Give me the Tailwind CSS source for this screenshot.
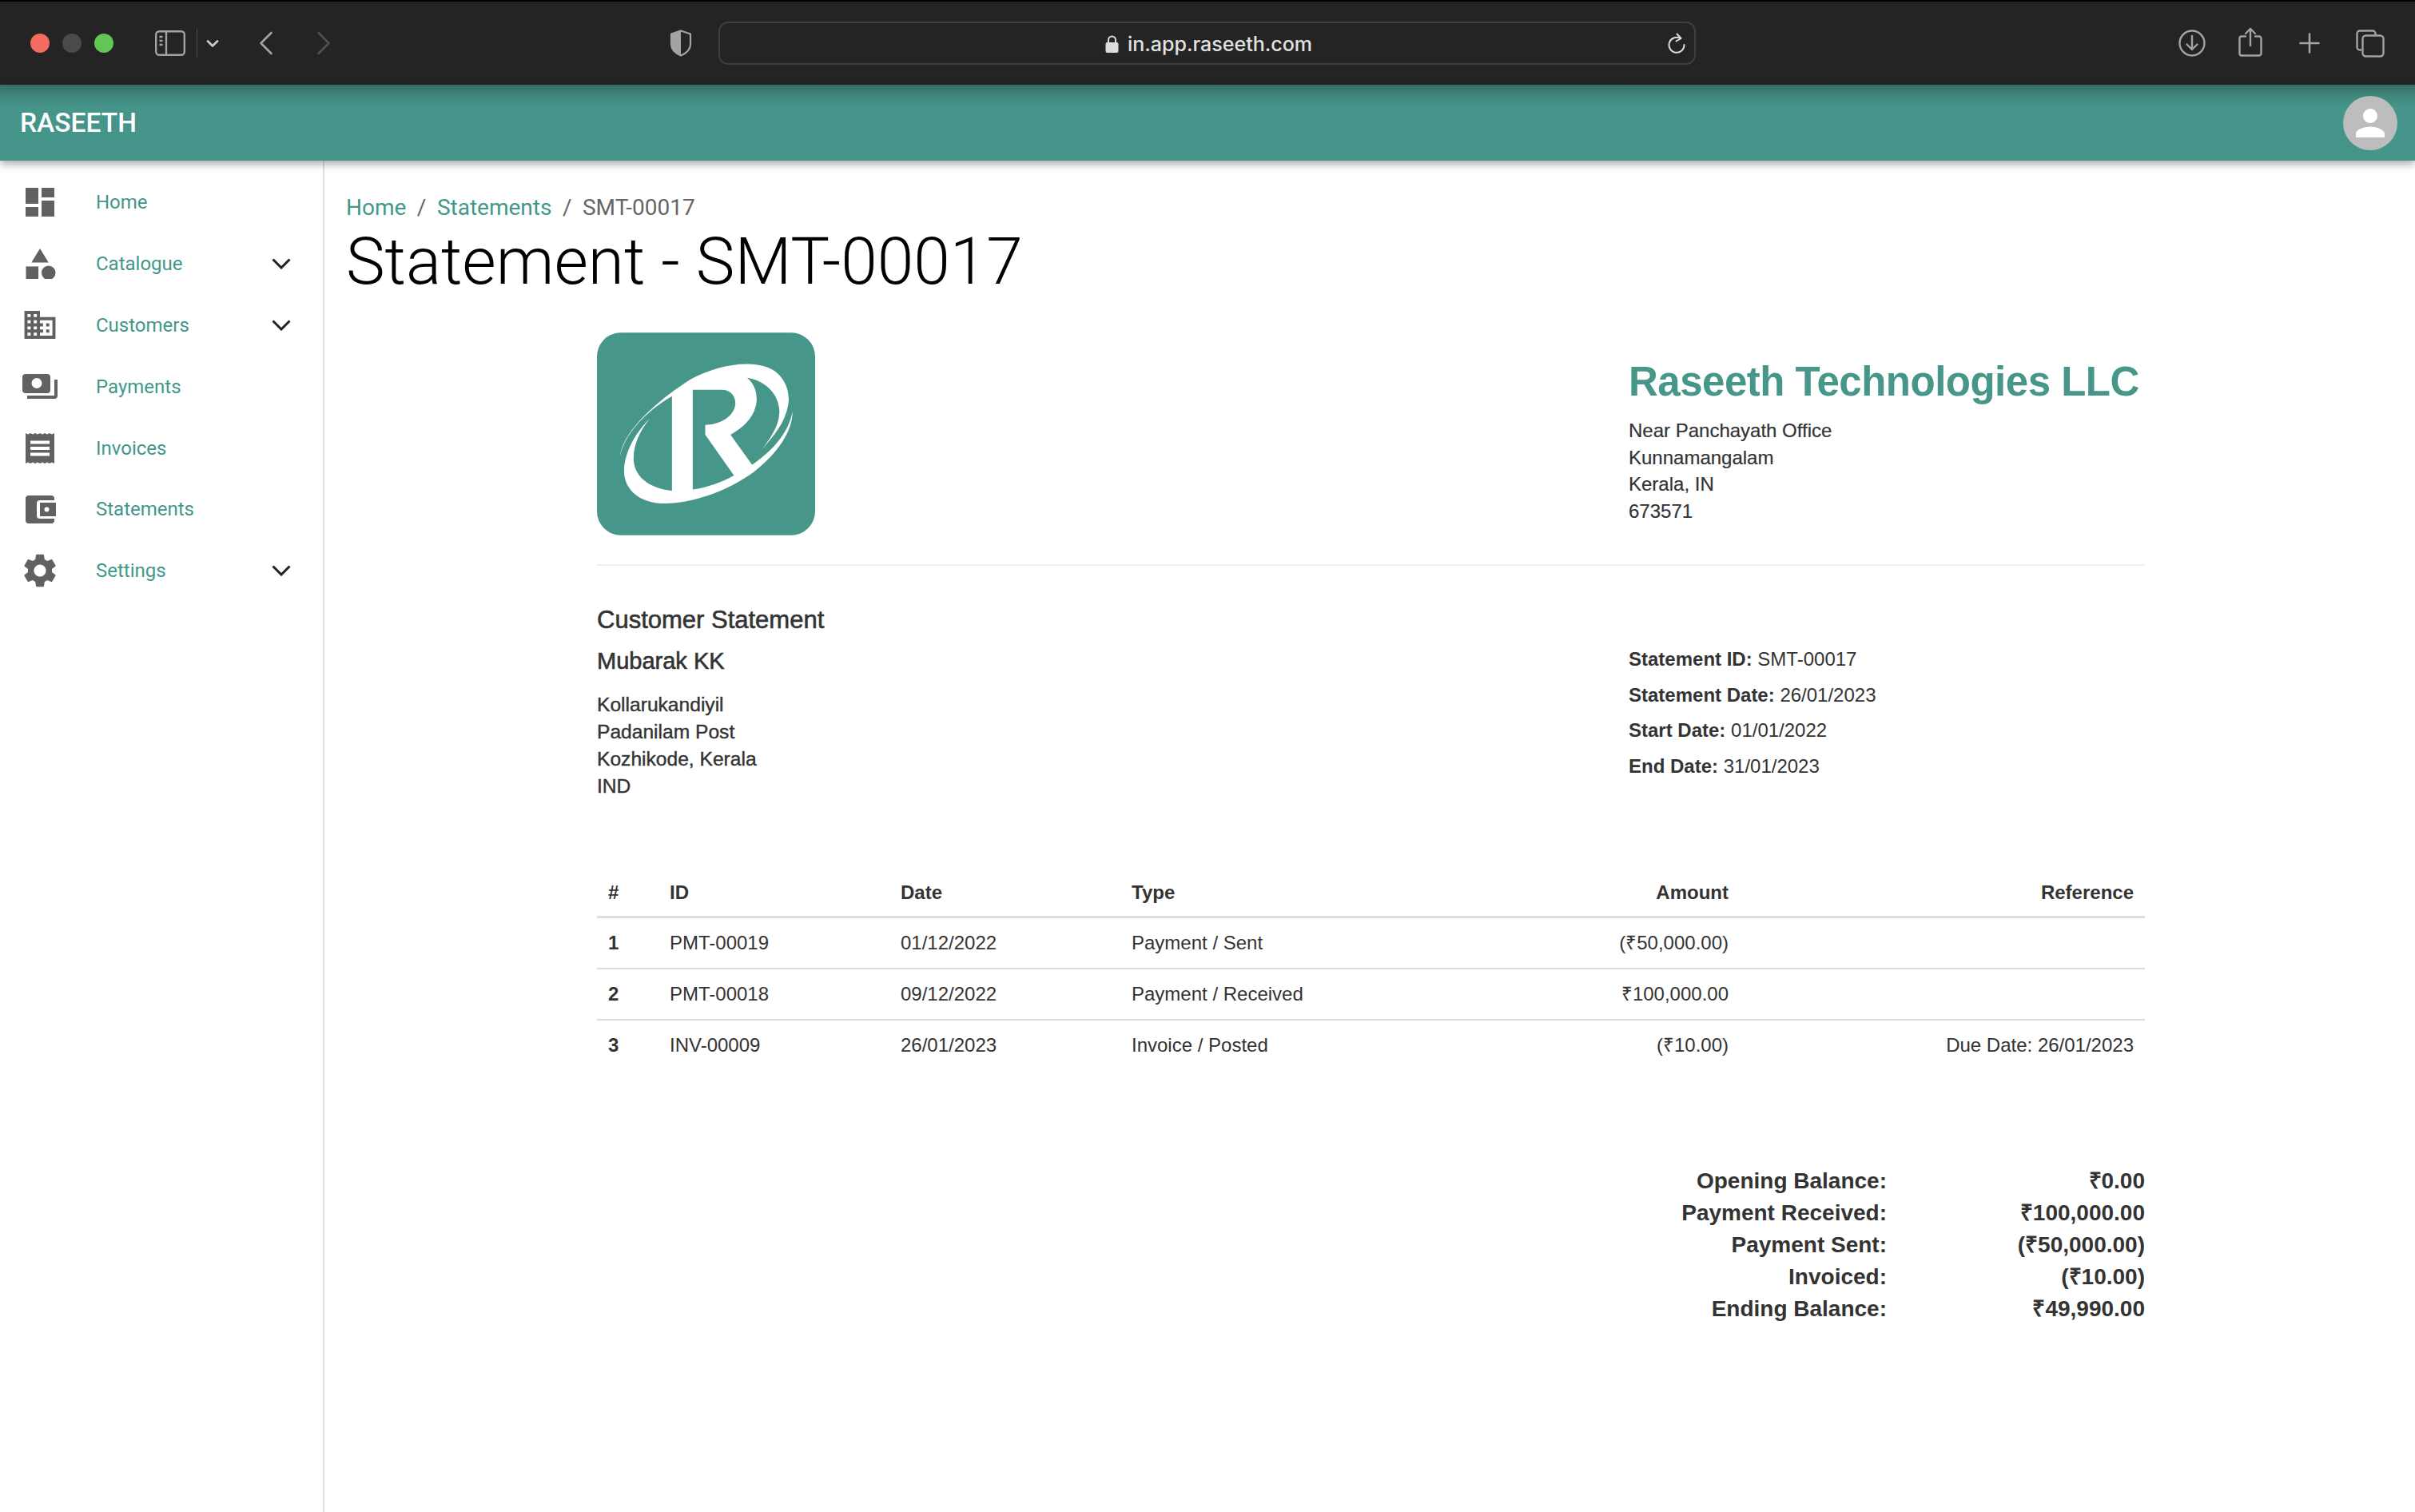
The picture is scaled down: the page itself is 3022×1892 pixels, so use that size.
<!doctype html>
<html lang="en">
<head>
<meta charset="utf-8">
<title>Statement - SMT-00017</title>
<script src="https://cdn.jsdelivr.net/npm/@tailwindcss/browser@4"></script>
</head>
<body class="m-0 bg-white">
<div class="flex h-[1892px] w-[3022px] flex-col overflow-hidden bg-white font-['Liberation_Sans',Arial,sans-serif] text-[#333]">

  <!-- Browser toolbar -->
  <div class="flex h-[106px] shrink-0 items-center border-t-2 border-black bg-[#252425] pl-[38px]">
    <span class="h-[24px] w-[24px] rounded-full bg-[#f46b60]"></span>
    <span class="ml-[16px] h-[24px] w-[24px] rounded-full bg-[#4a4a4b]"></span>
    <span class="ml-[16px] h-[24px] w-[24px] rounded-full bg-[#62c655]"></span>
    <svg class="ml-[52px]" width="38" height="32" viewBox="0 0 38 32" fill="none" stroke="#a3a3a3" stroke-width="2.4"><rect x="1.2" y="1.2" width="35.6" height="29.6" rx="4"/><path d="M14 1v30"/><path d="M5.5 8h4M5.5 13h4M5.5 18h4"/></svg>
    <span class="ml-[14px] h-[36px] w-[1px] bg-[#4a4a4a]"></span>
    <svg class="ml-[11px]" width="16" height="9" viewBox="0 0 16 9" fill="none" stroke="#c8c8c8" stroke-width="2.8" stroke-linecap="round" stroke-linejoin="round"><path d="M2 1.5l6 6 6-6"/></svg>
    <svg class="ml-[50px]" width="18" height="30" viewBox="0 0 18 30" fill="none" stroke="#a3a3a3" stroke-width="2.6" stroke-linecap="round" stroke-linejoin="round"><path d="M15.5 2L2.5 15l13 13"/></svg>
    <svg class="ml-[54px]" width="18" height="30" viewBox="0 0 18 30" fill="none" stroke="#505050" stroke-width="2.6" stroke-linecap="round" stroke-linejoin="round"><path d="M2.5 2l13 13-13 13"/></svg>
    <svg class="ml-[424px]" width="28" height="34" viewBox="0 0 28 34" fill="none"><path d="M14 1.500l12 4v13c0 6-5 11-12 14C7 29.500 2 24.500 2 18.500v-13z" stroke="#a3a3a3" stroke-width="2.200"/><path d="M14 1.500l-12 4v13c0 6 5 11 12 14z" fill="#a3a3a3"/></svg>
    <div class="ml-[33px] flex h-[54px] w-[1223px] items-center rounded-[12px] border-2 border-[#3f3e3f] pr-[10px]">
      <div class="flex flex-1 items-center justify-center pl-[38px] pt-[2px]">
        <svg width="17" height="24" viewBox="0 0 17 24" fill="#dcdcdc"><path d="M3 10V7a5.500 5.500 0 0 1 11 0v3h-2V7a3.500 3.500 0 0 0-7 0v3z"/><rect x="0.500" y="10" width="16" height="13" rx="2"/></svg>
        <span class="ml-[11px] font-['Inter',sans-serif] text-[25px] font-medium leading-none text-[#e2e2e2]">in.app.raseeth.com</span>
      </div>
      <svg width="24" height="26" viewBox="0 0 24 26" fill="none" stroke="#dcdcdc" stroke-width="2" stroke-linecap="round" stroke-linejoin="round"><path d="M17 7.200A9.500 9.500 0 1 0 21.500 15"/><path d="M12.500 1.500l5 5.500-6 3.500"/></svg>
    </div>
    <svg class="ml-[604px]" width="34" height="34" viewBox="0 0 34 34" fill="none" stroke="#a3a3a3" stroke-width="2.4" stroke-linecap="round" stroke-linejoin="round"><circle cx="17" cy="17" r="15.500"/><path d="M17 8v17M10.500 18.500L17 25l6.500-6.500"/></svg>
    <svg class="ml-[41px] -mt-[3px]" width="30" height="37" viewBox="0 0 30 37" fill="none" stroke="#a3a3a3" stroke-width="2.400" stroke-linecap="round" stroke-linejoin="round"><path d="M9 11.500H4a2.500 2.500 0 0 0-2.500 2.500v19a2.500 2.500 0 0 0 2.500 2.500h22a2.500 2.500 0 0 0 2.500-2.500V14a2.500 2.500 0 0 0-2.500-2.500h-5"/><path d="M15 23V2M9 8l6-6 6 6"/></svg>
    <svg class="ml-[46px]" width="26" height="26" viewBox="0 0 26 26" fill="none" stroke="#a3a3a3" stroke-width="2.600" stroke-linecap="round"><path d="M13 1.500v23M1.500 13h23"/></svg>
    <svg class="ml-[45px]" width="36" height="35" viewBox="0 0 36 35" fill="none" stroke="#a3a3a3" stroke-width="2.400"><path d="M7 25.500H5a3.500 3.500 0 0 1-3.500-3.500V5A3.500 3.500 0 0 1 5 1.500h16A3.500 3.500 0 0 1 24.500 5v2.500"/><rect x="8.500" y="7.500" width="26" height="26" rx="4"/></svg>
  </div>

  <!-- App bar -->
  <header class="relative z-10 flex h-[95px] shrink-0 items-center justify-between bg-[linear-gradient(to_bottom,#366c64_0px,#41877d_14px,#45958a_28px,#44948a_100%)] pl-[25px] pr-[22px] shadow-[0_4px_10px_rgba(0,0,0,0.35)]">
    <span class="font-['Roboto',sans-serif] text-[33.500px] font-medium leading-none text-white">RASEETH</span>
    <span class="flex h-[68px] w-[68px] items-center justify-center rounded-full bg-[#bdbdbd]">
      <svg width="54" height="54" viewBox="0 0 24 24" fill="#ffffff"><path d="M12 12c2.200 0 4-1.800 4-4s-1.800-4-4-4-4 1.800-4 4 1.800 4 4 4zm0 2c-2.700 0-8 1.300-8 4v2h16v-2c0-2.700-5.300-4-8-4z"/></svg>
    </span>
  </header>

  <div class="flex min-h-0 flex-1">
    <!-- Sidebar -->
    <nav class="flex w-[406px] shrink-0 flex-col border-r-2 border-[#e2e2e2] pt-[14px] font-['Roboto',sans-serif] text-[24px] text-[#42978a]">
      <a class="flex h-[76.800px] items-center">
        <svg class="ml-[32px]" width="36" height="36" viewBox="3 3 18 18" fill="#616161"><path d="M3 13h8V3H3v10zm0 8h8v-6H3v6zm10 0h8V11h-8v10zm0-18v6h8V3h-8z"/></svg>
        <span class="ml-[52px]">Home</span>
      </a>
      <a class="flex h-[76.800px] items-center">
        <svg class="ml-[32px]" width="38" height="38" viewBox="3 2 19 19.500" fill="#616161"><path d="M12 2l-5.500 9h11z"/><circle cx="17.500" cy="17.500" r="4.500"/><path d="M3 13.500h8v8H3z"/></svg>
        <span class="ml-[50px] flex-1">Catalogue</span>
        <svg class="mr-[40px]" width="24" height="14" viewBox="0 0 24 14" fill="none" stroke="#212121" stroke-width="3"><path d="M1.500 1.500L12 12 22.500 1.500"/></svg>
      </a>
      <a class="flex h-[76.800px] items-center">
        <svg class="ml-[30px]" width="40" height="35" viewBox="2 3 20 18" fill="#616161"><path d="M12 7V3H2v18h20V7H12zM6 19H4v-2h2v2zm0-4H4v-2h2v2zm0-4H4V9h2v2zm0-4H4V5h2v2zm4 12H8v-2h2v2zm0-4H8v-2h2v2zm0-4H8V9h2v2zm0-4H8V5h2v2zm10 12h-8v-2h2v-2h-2v-2h2v-2h-2V9h8v10zm-2-8h-2v2h2v-2zm0 4h-2v2h2v-2z"/></svg>
        <span class="ml-[50px] flex-1">Customers</span>
        <svg class="mr-[40px]" width="24" height="14" viewBox="0 0 24 14" fill="none" stroke="#212121" stroke-width="3"><path d="M1.500 1.500L12 12 22.500 1.500"/></svg>
      </a>
      <a class="flex h-[76.800px] items-center">
        <svg class="ml-[28px]" width="44" height="33" viewBox="0 0 44 31" fill="#616161"><path d="M4 0h27a4 4 0 0 1 4 4v16a4 4 0 0 1-4 4H4a4 4 0 0 1-4-4V4a4 4 0 0 1 4-4zm14 18a6.500 6.500 0 1 0 0-13 6.500 6.500 0 0 0 0 13z" fill-rule="evenodd"/><path d="M40 7h4v20a4 4 0 0 1-4 4H6v-4h34z"/></svg>
        <span class="ml-[48px]">Payments</span>
      </a>
      <a class="flex h-[76.800px] items-center">
        <svg class="ml-[32px]" width="36" height="38" viewBox="0 0 36 38" fill="#616161"><path d="M0 0l3 1.500L6 0l3 1.500L12 0l3 1.500L18 0l3 1.500L24 0l3 1.500L30 0l3 1.500L36 0v38l-3-1.500L30 38l-3-1.500L24 38l-3-1.500L18 38l-3-1.500L12 38l-3-1.500L6 38l-3-1.500L0 38zM6 9.500v4h24v-4zM6 17v4h24v-4zM6 24.500v4h24v-4z" fill-rule="evenodd"/></svg>
        <span class="ml-[52px]">Invoices</span>
      </a>
      <a class="flex h-[76.800px] items-center">
        <svg class="ml-[32px]" width="38" height="35" viewBox="0 0 38 35" fill="#616161"><path d="M4 0h28a4 4 0 0 1 4 4v2H18a4 4 0 0 0-4 4v15a4 4 0 0 0 4 4h18v2a4 4 0 0 1-4 4H4a4 4 0 0 1-4-4V4a4 4 0 0 1 4-4z"/><path d="M18 9h20v17H18zm8.500 11.500a3 3 0 1 0 0-6 3 3 0 0 0 0 6z" fill-rule="evenodd"/></svg>
        <span class="ml-[50px]">Statements</span>
      </a>
      <a class="flex h-[76.800px] items-center">
        <svg class="ml-[29px]" width="42" height="42" viewBox="2 2 20 20" fill="#616161"><path d="M19.140 12.940c.04-.3.060-.61.060-.94 0-.32-.020-.64-.070-.94l2.030-1.580a.49.490 0 0 0 .120-.61l-1.920-3.320a.488.488 0 0 0-.590-.220l-2.390.960c-.500-.380-1.030-.700-1.620-.940l-.360-2.540a.484.484 0 0 0-.480-.410h-3.840c-.240 0-.430.170-.470.410l-.360 2.540c-.590.240-1.130.570-1.620.940l-2.390-.960c-.220-.080-.470 0-.590.220L2.740 8.870c-.120.210-.080.470.120.610l2.030 1.580c-.050.300-.090.630-.090.940s.020.640.070.940l-2.030 1.580a.49.490 0 0 0-.120.610l1.920 3.320c.120.220.370.290.590.220l2.390-.960c.500.380 1.030.700 1.620.940l.360 2.540c.050.240.240.410.480.410h3.840c.240 0 .440-.170.470-.410l.360-2.540c.590-.240 1.130-.560 1.620-.940l2.390.960c.220.080.470 0 .590-.220l1.920-3.320c.120-.220.070-.470-.120-.610l-2.010-1.580zM12 15.600c-1.980 0-3.600-1.620-3.600-3.600s1.620-3.600 3.600-3.600 3.600 1.620 3.600 3.600-1.620 3.600-3.600 3.600z"/></svg>
        <span class="ml-[49px] flex-1">Settings</span>
        <svg class="mr-[40px]" width="24" height="14" viewBox="0 0 24 14" fill="none" stroke="#212121" stroke-width="3"><path d="M1.500 1.500L12 12 22.500 1.500"/></svg>
      </a>
    </nav>

    <!-- Main -->
    <main class="min-w-0 flex-1 pl-[27px] pr-[338px]">
      <div class="mt-[43px] flex font-['Roboto',sans-serif] text-[28px] leading-[32px]">
        <a class="text-[#42978a]">Home</a>
        <span class="mx-[13.500px] text-[#666]">/</span>
        <a class="text-[#42978a]">Statements</a>
        <span class="mx-[13.500px] text-[#666]">/</span>
        <span class="text-[#666]">SMT-00017</span>
      </div>
      <h1 class="mt-[1px] font-['Roboto',sans-serif] text-[82px] font-light leading-[100px] text-black">Statement - SMT-00017</h1>

      <section class="ml-[314px] mt-[39px]">
        <!-- Company header -->
        <div class="flex h-[292px] items-start justify-between border-b-2 border-[#eeeeee]">
          <svg class="h-[254px] w-[273px] shrink-0" viewBox="50 48 820 762">
            <rect x="50" y="48" width="820" height="762" rx="90" fill="#46978a"/>
            <path fill="#ffffff" fill-rule="evenodd" d="M137 512C145 440 230 335 400 225C490 175 610 150 690 178C750 200 775 260 770 310C762 380 720 430 672 485C715 430 740 380 735 335C730 275 680 228 615 218C640 240 652 270 650 305C645 365 600 405 552 432L633 545C700 500 770 430 785 345C785 420 730 500 640 572C540 645 400 695 290 690C200 685 150 630 152 565C155 490 200 420 248 372C205 425 185 480 188 530C195 600 260 635 332 642L332 287C240 340 155 425 137 512ZM410 263L520 263C555 263 572 290 570 318C565 365 510 395 457 395L457 432L565 585C520 610 465 630 410 638Z"/>
          </svg>
          <div class="w-[646px] pt-[30px]">
            <h2 class="whitespace-nowrap text-[51px] font-bold leading-[64px] tracking-[-0.5px] text-[#46978a]">Raseeth Technologies LLC</h2>
            <div class="mt-[12px] text-[24px] leading-[33.700px] [-webkit-text-stroke:0.2px_#333]">
              <div>Near Panchayath Office</div>
              <div>Kunnamangalam</div>
              <div>Kerala, IN</div>
              <div>673571</div>
            </div>
          </div>
        </div>

        <!-- Customer and statement details -->
        <div class="mt-[48px] flex h-[331px] items-start justify-between">
          <div>
            <div class="text-[31px] leading-[40px] [-webkit-text-stroke:0.6px_#333]">Customer Statement</div>
            <div class="mt-[11px] text-[29px] leading-[40px] [-webkit-text-stroke:0.6px_#333]">Mubarak KK</div>
            <div class="mt-[18px] text-[24.600px] leading-[34px] [-webkit-text-stroke:0.4px_#333]">
              <div>Kollarukandiyil</div>
              <div>Padanilam Post</div>
              <div>Kozhikode, Kerala</div>
              <div>IND</div>
            </div>
          </div>
          <div class="w-[646px] pt-[47px] text-[24px] leading-[44.700px]">
            <div><b>Statement ID:</b> SMT-00017</div>
            <div><b>Statement Date:</b> 26/01/2023</div>
            <div><b>Start Date:</b> 01/01/2022</div>
            <div><b>End Date:</b> 31/01/2023</div>
          </div>
        </div>

        <!-- Transactions -->
        <div class="text-[24px]">
          <div class="flex h-[62px] items-center border-b-[3px] border-[#dddddd] font-bold">
            <span class="w-[91px] pl-[14px]">#</span>
            <span class="w-[289px]">ID</span>
            <span class="w-[289px]">Date</span>
            <span class="w-[300px]">Type</span>
            <span class="w-[447px] text-right">Amount</span>
            <span class="flex-1 pr-[14px] text-right">Reference</span>
          </div>
          <div class="flex h-[64px] items-center border-b-2 border-[#dddddd]">
            <b class="w-[91px] pl-[14px]">1</b>
            <span class="w-[289px]">PMT-00019</span>
            <span class="w-[289px]">01/12/2022</span>
            <span class="w-[300px]">Payment / Sent</span>
            <span class="w-[447px] whitespace-nowrap text-right">(₹50,000.00)</span>
            <span class="flex-1"></span>
          </div>
          <div class="flex h-[64px] items-center border-b-2 border-[#dddddd]">
            <b class="w-[91px] pl-[14px]">2</b>
            <span class="w-[289px]">PMT-00018</span>
            <span class="w-[289px]">09/12/2022</span>
            <span class="w-[300px]">Payment / Received</span>
            <span class="w-[447px] whitespace-nowrap text-right">₹100,000.00</span>
            <span class="flex-1"></span>
          </div>
          <div class="flex h-[62px] items-center">
            <b class="w-[91px] pl-[14px]">3</b>
            <span class="w-[289px]">INV-00009</span>
            <span class="w-[289px]">26/01/2023</span>
            <span class="w-[300px]">Invoice / Posted</span>
            <span class="w-[447px] whitespace-nowrap text-right">(₹10.00)</span>
            <span class="flex-1 pr-[14px] text-right">Due Date: 26/01/2023</span>
          </div>
        </div>

        <!-- Totals -->
        <div class="mt-[119px] flex flex-col text-[28px] font-bold leading-[40px]">
          <div class="flex justify-end"><span class="text-right">Opening Balance:</span><span class="w-[323px] text-right">₹0.00</span></div>
          <div class="flex justify-end"><span class="text-right">Payment Received:</span><span class="w-[323px] text-right">₹100,000.00</span></div>
          <div class="flex justify-end"><span class="text-right">Payment Sent:</span><span class="w-[323px] text-right">(₹50,000.00)</span></div>
          <div class="flex justify-end"><span class="text-right">Invoiced:</span><span class="w-[323px] text-right">(₹10.00)</span></div>
          <div class="flex justify-end"><span class="text-right">Ending Balance:</span><span class="w-[323px] text-right">₹49,990.00</span></div>
        </div>
      </section>
    </main>
  </div>
</div>
</body>
</html>
